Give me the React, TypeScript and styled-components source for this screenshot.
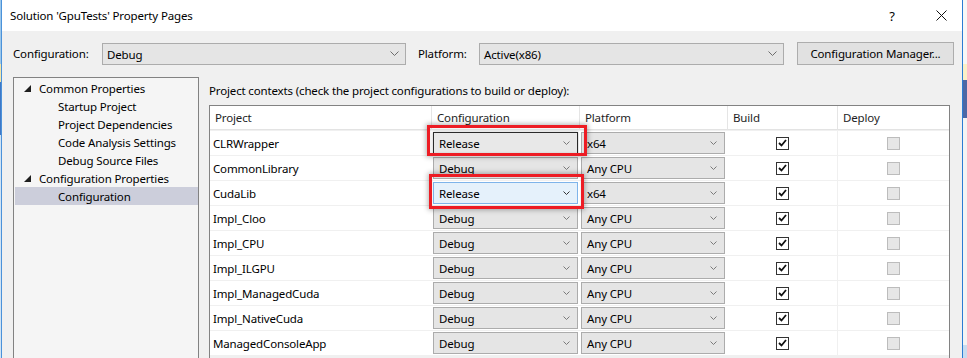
import React from "react";
import styled, { createGlobalStyle, css } from "styled-components";

const FONT = `"Noto Sans", "Segoe UI", sans-serif`;

const GlobalStyle = createGlobalStyle`
  html, body { margin: 0; padding: 0; }
  body {
    font-family: ${FONT};
    font-size: 11.5px;
    letter-spacing: -0.15px;
    color: #000;
    background: #ffffff;
  }
  #root { width: 967px; height: 358px; }
`;

const Screen = styled.div`
  display: flex;
  width: 967px;
  height: 358px;
  overflow: hidden;
`;

const EdgeStrip = styled.div<{ $side: "left" | "right" }>`
  flex: none;
  width: ${(p) => (p.$side === "left" ? 1 : 4)}px;
  background: ${(p) =>
    p.$side === "left"
      ? "linear-gradient(#9cc7ea 0 64px, #f3e6a8 64px 82px, #3f78c6 82px 135px, #cfe3f5 135px)"
      : "linear-gradient(#f7f7f7 0 64px, #fbf0c8 64px 80px, #4d68a5 80px 118px, #f4f4f4 118px 345px, #c9dcef 345px)"};
`;

const Dialog = styled.div`
  flex: none;
  width: 962px;
  height: 358px;
  box-sizing: border-box;
  border-left: 1px solid #4b92da;
  border-right: 1px solid #2b7cd3;
  display: flex;
  flex-direction: column;
  background: #f0f0f0;
`;

const TitleBar = styled.div`
  flex: none;
  height: 31px;
  background: #ffffff;
  display: flex;
  align-items: center;
  padding-left: 8px;
`;

const TitleText = styled.span`
  color: #000;
  margin-top: -1px;
`;

const CaptionButtons = styled.div`
  margin-left: auto;
  display: flex;
  gap: 7px;
  height: 100%;
`;

const CaptionButton = styled.div`
  width: 42px;
  height: 100%;
  display: flex;
  align-items: center;
  justify-content: center;
  font-size: 13px;
  color: #000;
`;

const Body = styled.div`
  flex: 1;
  padding: 11px 12px 0 11px;
  display: flex;
  flex-direction: column;
`;

const TopRow = styled.div`
  display: flex;
  align-items: center;
  height: 23px;
`;

const FieldLabel = styled.span<{ $w: number; $gap?: number }>`
  width: ${(p) => p.$w}px;
  margin-left: ${(p) => p.$gap ?? 0}px;
  flex: none;
`;

const ComboBox = styled.div<{ $w: number }>`
  width: ${(p) => p.$w}px;
  height: 22px;
  box-sizing: border-box;
  border: 1px solid #acacac;
  background: #e5e5e5;
  display: flex;
  align-items: center;
  padding: 0 6px 0 4px;
  flex: none;
  margin-top: 1px;
  & > span { flex: 1; }
`;

const PushButton = styled.div`
  flex: none;
  margin-left: 13px;
  width: 157px;
  height: 23px;
  box-sizing: border-box;
  border: 1px solid #adadad;
  background: #e1e1e1;
  display: flex;
  align-items: center;
  justify-content: center;
`;

const Main = styled.div`
  margin-top: 12px;
  display: flex;
  gap: 10px;
  height: 320px;
`;

const TreePanel = styled.div`
  width: 186px;
  flex: none;
  box-sizing: border-box;
  border: 1px solid #828282;
  background: #f5f5f5;
  padding-top: 1px;
`;

const TreeItem = styled.div<{ $level: number; $selected?: boolean }>`
  height: 18px;
  display: flex;
  align-items: center;
  margin-left: 1px;
  padding-left: ${(p) => (p.$level === 0 ? 9 : 43)}px;
  background: ${(p) => (p.$selected ? "#cccedb" : "transparent")};
  & > svg { margin-right: 8px; flex: none; }
`;

const RightPanel = styled.div`
  width: 741px;
  flex: none;
  display: flex;
  flex-direction: column;
  padding-top: 6px;
`;

const Caption = styled.div`
  line-height: 16px;
  height: 16px;
  margin-bottom: 6px;
`;

const Grid = styled.div`
  flex: 1;
  box-sizing: border-box;
  border: 1px solid #828282;
  border-bottom: none;
  background: #f0f0f0;
  display: grid;
  grid-template-columns: 221px 148px 148px 110px 112px;
  grid-auto-rows: 25px;
  align-content: start;
`;

const HeaderCell = styled.div<{ $first?: boolean }>`
  height: 24px;
  box-sizing: border-box;
  background: #fff;
  border-bottom: 1px solid #e3e3e3;
  border-left: ${(p) => (p.$first ? "none" : "1px solid #e5e5e5")};
  padding-left: 5px;
  display: flex;
  align-items: center;
  color: #1e1e1e;
`;

const Cell = styled.div<{ $kind: "name" | "combo" | "check"; $divider?: boolean }>`
  position: relative;
  box-sizing: border-box;
  height: 25px;
  background: #fff;
  border-bottom: 1px solid #f0f0f0;
  border-left: ${(p) => (p.$divider ? "1px solid #f0f0f0" : "none")};
  display: flex;
  align-items: center;
  ${(p) =>
    p.$kind === "name" &&
    css`
      padding-left: 3px;
    `}
  ${(p) =>
    p.$kind === "combo" &&
    css`
      padding: 1px 0 0 2px;
      align-items: flex-start;
    `}
  ${(p) =>
    p.$kind === "check" &&
    css`
      justify-content: center;
    `}
`;

const RowCombo = styled.div<{ $w: number; $state?: "normal" | "focus" | "hover" }>`
  width: ${(p) => p.$w}px;
  height: 22px;
  box-sizing: border-box;
  display: flex;
  align-items: center;
  padding: 0 7px 0 5px;
  border: 1px solid #acacac;
  background: #e5e5e5;
  & > span { flex: 1; }
  ${(p) =>
    p.$state === "focus" &&
    css`
      border-color: #2a2a2a;
      background: #e8e8e8;
      box-shadow: 0 0 3px rgba(0, 0, 0, 0.25);
    `}
  ${(p) =>
    p.$state === "hover" &&
    css`
      border-color: #7eb4ea;
      background: #e5f1fb;
    `}
`;

const Highlight = styled.div<{ $l: number; $t: number; $w: number; $h: number }>`
  position: absolute;
  left: ${(p) => p.$l}px;
  top: ${(p) => p.$t}px;
  width: ${(p) => p.$w}px;
  height: ${(p) => p.$h}px;
  box-sizing: border-box;
  border: 3px solid #ed1c24;
  box-shadow: 0 0 5px 1px rgba(0, 0, 0, 0.3), inset 0 0 2px rgba(0, 0, 0, 0.15);
  pointer-events: none;
  z-index: 2;
`;

const CheckBox = styled.div<{ $disabled?: boolean }>`
  width: 13px;
  height: 13px;
  box-sizing: border-box;
  border: 1px solid ${(p) => (p.$disabled ? "#bcbcbc" : "#333333")};
  background: ${(p) => (p.$disabled ? "#e6e6e6" : "#ffffff")};
  display: flex;
  align-items: center;
  justify-content: center;
`;

const Chevron = ({ w = 7, color = "#6d6d6d" }: { w?: number; color?: string }) => (
  <svg width={w} height={Math.ceil(w / 2) + 1} viewBox={`0 0 ${w} ${Math.ceil(w / 2) + 1}`}>
    <polyline
      points={`0.5,0.5 ${w / 2},${w / 2} ${w - 0.5},0.5`}
      fill="none"
      stroke={color}
      strokeWidth="1"
    />
  </svg>
);

const TreeArrow = () => (
  <svg width="7" height="7" viewBox="0 0 7 7">
    <polygon points="0,7 7,7 7,0" fill="#1e1e1e" />
  </svg>
);

const CheckMark = () => (
  <svg width="9" height="8" viewBox="0 0 9 8">
    <polyline points="1,4 3.5,6.5 8,1" fill="none" stroke="#111" strokeWidth="1.8" />
  </svg>
);

const CloseIcon = () => (
  <svg width="11" height="11" viewBox="0 0 11 11">
    <path d="M0.5 0.5 L10.5 10.5 M10.5 0.5 L0.5 10.5" stroke="#111" strokeWidth="1" fill="none" />
  </svg>
);

type Row = {
  name: string;
  config: string;
  platform: string;
  state?: "normal" | "focus" | "hover";
  mark?: { l: number; t: number; w: number; h: number };
};

const rows: Row[] = [
  { name: "CLRWrapper", config: "Release", platform: "x64", state: "focus", mark: { l: -4, t: -6, w: 160, h: 31 } },
  { name: "CommonLibrary", config: "Debug", platform: "Any CPU" },
  { name: "CudaLib", config: "Release", platform: "x64", state: "hover", mark: { l: -2, t: -7, w: 155, h: 35 } },
  { name: "Impl_Cloo", config: "Debug", platform: "Any CPU" },
  { name: "Impl_CPU", config: "Debug", platform: "Any CPU" },
  { name: "Impl_ILGPU", config: "Debug", platform: "Any CPU" },
  { name: "Impl_ManagedCuda", config: "Debug", platform: "Any CPU" },
  { name: "Impl_NativeCuda", config: "Debug", platform: "Any CPU" },
  { name: "ManagedConsoleApp", config: "Debug", platform: "Any CPU" },
];

const tree = [
  { label: "Common Properties", level: 0 },
  { label: "Startup Project", level: 1 },
  { label: "Project Dependencies", level: 1 },
  { label: "Code Analysis Settings", level: 1 },
  { label: "Debug Source Files", level: 1 },
  { label: "Configuration Properties", level: 0 },
  { label: "Configuration", level: 1, selected: true },
];

export default function App() {
  return (
    <>
      <GlobalStyle />
      <Screen>
        <EdgeStrip $side="left" />
        <Dialog>
          <TitleBar>
            <TitleText>Solution 'GpuTests' Property Pages</TitleText>
            <CaptionButtons>
              <CaptionButton>?</CaptionButton>
              <CaptionButton>
                <CloseIcon />
              </CaptionButton>
            </CaptionButtons>
          </TitleBar>
          <Body>
            <TopRow>
              <FieldLabel $w={89}>Configuration:</FieldLabel>
              <ComboBox $w={304}>
                <span>Debug</span>
                <Chevron w={9} />
              </ComboBox>
              <FieldLabel $w={61} $gap={12}>
                Platform:
              </FieldLabel>
              <ComboBox $w={305}>
                <span>Active(x86)</span>
                <Chevron w={9} />
              </ComboBox>
              <PushButton>Configuration Manager...</PushButton>
            </TopRow>
            <Main>
              <TreePanel>
                {tree.map((t) => (
                  <TreeItem key={t.label} $level={t.level} $selected={t.selected}>
                    {t.level === 0 && <TreeArrow />}
                    <span>{t.label}</span>
                  </TreeItem>
                ))}
              </TreePanel>
              <RightPanel>
                <Caption>Project contexts (check the project configurations to build or deploy):</Caption>
                <Grid>
                  <HeaderCell $first>Project</HeaderCell>
                  <HeaderCell>Configuration</HeaderCell>
                  <HeaderCell>Platform</HeaderCell>
                  <HeaderCell>Build</HeaderCell>
                  <HeaderCell>Deploy</HeaderCell>
                  {rows.map((r) => (
                    <React.Fragment key={r.name}>
                      <Cell $kind="name">{r.name}</Cell>
                      <Cell $kind="combo">
                        <RowCombo $w={145} $state={r.state}>
                          <span>{r.config}</span>
                          <Chevron w={7} color={r.state === "hover" ? "#333" : "#7a7a7a"} />
                        </RowCombo>
                        {r.mark && <Highlight $l={r.mark.l} $t={r.mark.t} $w={r.mark.w} $h={r.mark.h} />}
                      </Cell>
                      <Cell $kind="combo">
                        <RowCombo $w={144}>
                          <span>{r.platform}</span>
                          <Chevron w={7} color="#7a7a7a" />
                        </RowCombo>
                      </Cell>
                      <Cell $kind="check">
                        <CheckBox>
                          <CheckMark />
                        </CheckBox>
                      </Cell>
                      <Cell $kind="check" $divider>
                        <CheckBox $disabled />
                      </Cell>
                    </React.Fragment>
                  ))}
                </Grid>
              </RightPanel>
            </Main>
          </Body>
        </Dialog>
        <EdgeStrip $side="right" />
      </Screen>
    </>
  );
}
